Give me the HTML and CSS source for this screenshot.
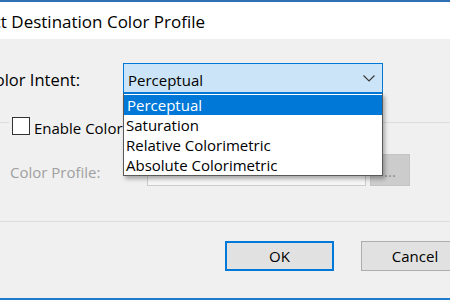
FILE: index.html
```html
<!DOCTYPE html>
<html>
<head>
<meta charset="utf-8">
<link rel="stylesheet" href="styles.css">
</head>
<body>
<div class="window">
  <div class="titlebar">
    <div class="title-clip"><span class="title">Select Destination Color Profile</span></div>
  </div>
  <div class="content">
    <div class="intent-row">
      <div class="label-clip"><span class="intent-label">Color Intent:</span></div>
      <div class="combo">
        <span class="combo-text">Perceptual</span>
        <svg class="chevron" width="12" height="7" viewBox="0 0 12 7"><polyline points="0.5,0.5 6,6 11.5,0.5" fill="none" stroke="#3c3c3c" stroke-width="1.2"/></svg>
        <ul class="list">
          <li class="item selected">Perceptual</li>
          <li class="item">Saturation</li>
          <li class="item">Relative Colorimetric</li>
          <li class="item">Absolute Colorimetric</li>
        </ul>
      </div>
    </div>
    <div class="group">
      <div class="group-head">
        <span class="checkbox"></span>
        <span class="check-label">Enable Color Management</span>
      </div>
      <div class="profile-row">
        <span class="profile-label">Color Profile:</span>
        <span class="textbox"></span>
        <span class="browse">...</span>
      </div>
    </div>
    <div class="buttons">
      <div class="btn default">OK</div>
      <div class="btn">Cancel</div>
    </div>
  </div>
</div>
</body>
</html>
```
FILE: styles.css
```css
html, body {
  margin: 0;
  padding: 0;
  width: 450px;
  height: 300px;
  overflow: hidden;
  background: #f0f0f0;
  font-family: "Open Sans", "Noto Sans", sans-serif;
  color: #000;
}

.window {
  width: 450px;
  height: 300px;
  box-sizing: border-box;
  border-bottom: 2px solid #1f7bd0;
  display: flex;
  flex-direction: column;
}

.titlebar {
  height: 39px;
  box-sizing: border-box;
  border-top: 2px solid #2f70b4;
  background: #ffffff;
  display: flex;
  align-items: center;
  flex-shrink: 0;
}

.title-clip {
  width: 205px;
  display: flex;
  justify-content: flex-end;
  white-space: nowrap;
}

.title {
  font-size: 17px;
  padding-top: 1px;
}

.content {
  flex: 1;
  display: flex;
  flex-direction: column;
}

.intent-row {
  margin-top: 24px;
  display: flex;
  align-items: baseline;
  font-size: 15px;
}

.label-clip {
  width: 80px;
  display: flex;
  justify-content: flex-end;
  white-space: nowrap;
}

.intent-label {
  font-size: 16.5px;
}

.combo {
  margin-left: 43px;
  width: 260px;
  height: 30px;
  box-sizing: border-box;
  border: 1px solid #0078d7;
  background: #cce4f7;
  display: flex;
  align-items: center;
  padding: 3px 7px 0 4px;
  position: relative;
}

.combo-text {
  flex: 1;
}

.chevron {
  margin-top: -3px;
}

.list {
  position: absolute;
  left: -1px;
  top: 29px;
  width: 260px;
  box-sizing: border-box;
  margin: 0;
  padding: 1px 0 0 0;
  list-style: none;
  background: #ffffff;
  border: 1px solid #5a5a5a;
  border-top: 1px solid #0078d7;
  box-shadow: 2px 3px 4px rgba(0, 0, 0, 0.3);
  z-index: 2;
}

.item {
  height: 20px;
  line-height: 21px;
  padding-left: 2px;
  white-space: nowrap;
}

.item.selected {
  background: #0078d7;
  color: #ffffff;
  padding-left: 3px;
}

.group {
  margin-top: 29px;
  height: 100px;
  box-sizing: border-box;
  border-top: 1px solid #dcdcdc;
  border-bottom: 1px solid #dcdcdc;
  display: flex;
  flex-direction: column;
  font-size: 15px;
}

.group-head {
  margin-top: -6px;
  margin-left: 9px;
  padding: 0 4px 0 3px;
  background: #f0f0f0;
  align-self: flex-start;
  display: flex;
  align-items: center;
  height: 18px;
}

.checkbox {
  width: 18px;
  height: 18px;
  box-sizing: border-box;
  border: 1px solid #333333;
  background: #ffffff;
}

.check-label {
  margin-left: 4px;
  padding-top: 4px;
  white-space: nowrap;
}

.profile-row {
  margin-top: 19px;
  display: flex;
  align-items: center;
  padding-left: 10px;
}

.profile-label {
  width: 137px;
  color: #a0a0a0;
  padding-top: 4px;
}

.textbox {
  width: 219px;
  height: 31px;
  box-sizing: border-box;
  border: 1px solid #cccccc;
  background: #f6f6f6;
}

.browse {
  margin-left: 4px;
  width: 40px;
  height: 32px;
  box-sizing: border-box;
  background: #cccccc;
  border: 1px solid #c4c4c4;
  color: #8a8a8a;
  display: flex;
  align-items: center;
  justify-content: center;
  padding-top: 2px;
}

.buttons {
  margin-top: 19px;
  padding-left: 225px;
  display: flex;
  gap: 27px;
  font-size: 15px;
}

.btn {
  width: 108px;
  height: 30px;
  box-sizing: border-box;
  border: 1px solid #adadad;
  background: #e1e1e1;
  display: flex;
  align-items: center;
  justify-content: center;
  flex-shrink: 0;
}

.btn.default {
  width: 109px;
  border: 2px solid #0078d7;
}
```
